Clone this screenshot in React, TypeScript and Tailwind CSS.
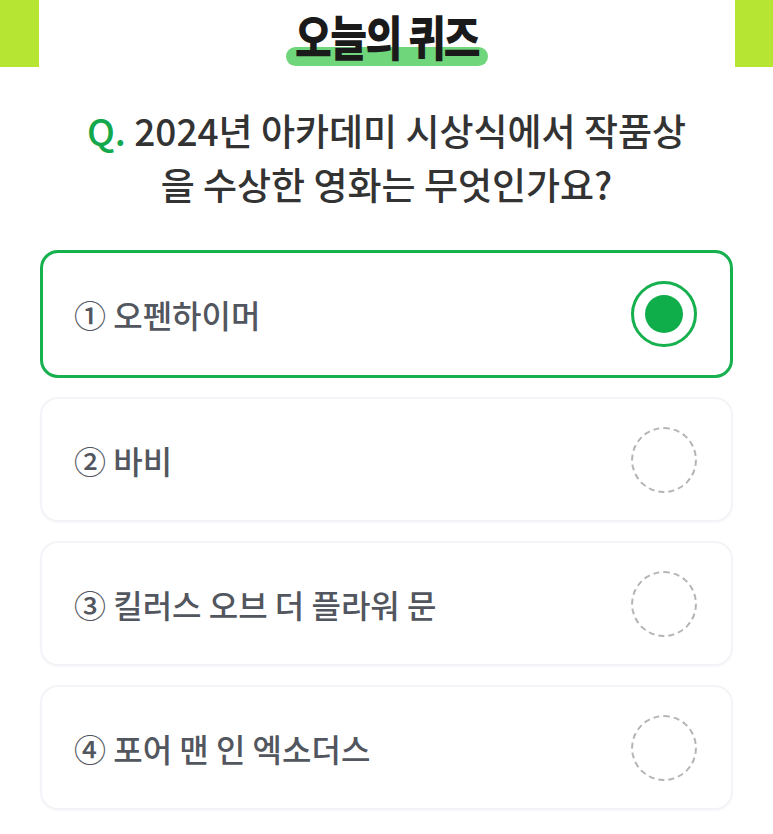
import { useState } from 'react';

const OPTIONS = ['오펜하이머', '바비', '킬러스 오브 더 플라워 문', '포어 맨 인 엑소더스'];
const MARKS = ['①', '②', '③', '④'];

function Radio({ checked }: { checked: boolean }) {
  if (checked) {
    return (
      <div className="w-[66px] h-[66px] rounded-full border-[3px] border-[#16b04f] flex items-center justify-center">
        <div className="w-[38px] h-[38px] rounded-full bg-[#0fae4b]" />
      </div>
    );
  }
  return <div className="w-[66px] h-[66px] rounded-full border-2 border-dashed border-[#b4b4b4]" />;
}

function App() {
  const [picked, setPicked] = useState(0);

  return (
    <div className="w-[773px] min-h-[834px] bg-white font-['Noto_Sans_CJK_KR','Noto_Sans',sans-serif]">
      <header className="flex justify-between items-start h-[103px]">
        <div className="w-[39px] h-[67px] bg-[#b6e534]" />
        <div className="relative mt-[12px] px-[9px]">
          <div className="absolute left-0 right-0 top-[35px] h-[19px] rounded-full bg-[#6fd67b]" />
          <h1 className="relative text-[40px] leading-[48px] font-black text-[#1a1a1a] tracking-[-1.5px] scale-y-[1.2] whitespace-nowrap">
            오늘의 퀴즈
          </h1>
        </div>
        <div className="w-[38px] h-[67px] bg-[#b6e534]" />
      </header>

      <h2 className="text-center text-[37px] leading-[54px] font-medium text-[#333333]">
        <span className="text-[#14a84d]">Q.</span> 2024년 아카데미 시상식에서 작품상
        <br />
        을 수상한 영화는 무엇인가요?
      </h2>

      <ul className="px-[40px] mt-[39px] flex flex-col gap-[19px]">
        {OPTIONS.map((label, i) => (
          <li
            key={label}
            onClick={() => setPicked(i)}
            className={
              i === picked
                ? 'h-[128px] rounded-[18px] border-[3px] border-[#16b04f] bg-white flex items-center justify-between pl-[31px] pr-[33px] cursor-pointer'
                : 'h-[125px] rounded-[18px] border-2 border-[#f2f4f7] shadow-[0_1px_2px_rgba(0,0,0,0.03)] bg-white flex items-center justify-between pl-[32px] pr-[34px] cursor-pointer'
            }
          >
            <span className="text-[32px] font-medium text-[#52565e]">
              {MARKS[i]} {label}
            </span>
            <Radio checked={i === picked} />
          </li>
        ))}
      </ul>
    </div>
  );
}

export default App;
